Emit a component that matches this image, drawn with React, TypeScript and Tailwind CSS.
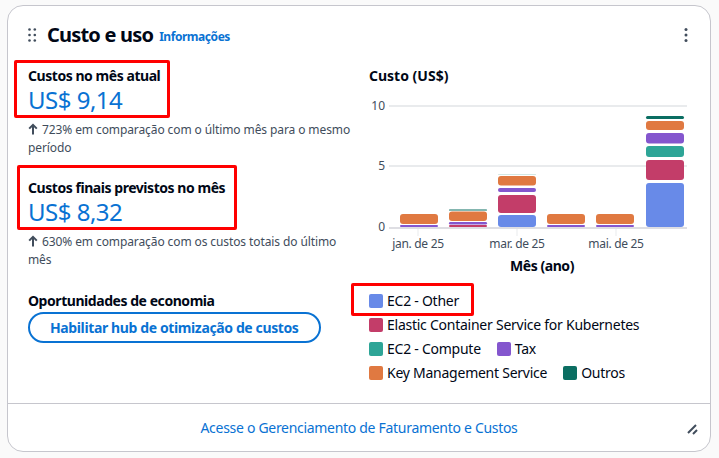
interface Segment {
  color: string;
  top: number;
  bottom: number;
}

interface Bar {
  x: number;
  segments: Segment[];
}

const BLUE = "#688ae8";
const RED = "#c33d69";
const TEAL = "#2ea597";
const PURPLE = "#8456ce";
const ORANGE = "#e07941";
const GREEN = "#0b6e62";

const FONT = "Noto Sans, sans-serif";

// chart coordinates: svg origin sits at page (370, 95)
const smallBar = (x: number): Bar => ({
  x,
  segments: [
    { color: PURPLE, top: 130, bottom: 132 },
    { color: ORANGE, top: 119, bottom: 129 },
  ],
});

const bars: Bar[] = [
  smallBar(31),
  {
    x: 80,
    segments: [
      { color: RED, top: 130, bottom: 132 },
      { color: PURPLE, top: 127, bottom: 129.5 },
      { color: ORANGE, top: 116.5, bottom: 126 },
      { color: GREEN, top: 114.5, bottom: 115.5 },
    ],
  },
  {
    x: 129,
    segments: [
      { color: BLUE, top: 120, bottom: 132 },
      { color: RED, top: 100, bottom: 118 },
      { color: PURPLE, top: 93, bottom: 97 },
      { color: ORANGE, top: 81, bottom: 90.5 },
      { color: "#d3e8e4", top: 79, bottom: 80 },
    ],
  },
  smallBar(178),
  smallBar(227),
  {
    x: 277,
    segments: [
      { color: BLUE, top: 88, bottom: 132 },
      { color: RED, top: 65, bottom: 85 },
      { color: TEAL, top: 51, bottom: 62 },
      { color: PURPLE, top: 38, bottom: 48.5 },
      { color: ORANGE, top: 26, bottom: 35 },
      { color: GREEN, top: 21, bottom: 24 },
    ],
  },
];

const legend = [
  { label: "EC2 - Other", color: BLUE },
  { label: "Elastic Container Service for Kubernetes", color: RED },
  { label: "EC2 - Compute", color: TEAL },
  { label: "Tax", color: PURPLE },
  { label: "Key Management Service", color: ORANGE },
  { label: "Outros", color: GREEN },
];

function ArrowUp() {
  return (
    <svg width="10" height="12" viewBox="0 0 10 12" className="mr-1 inline-block align-[-1px]">
      <path d="M5 11.5V2M1.2 5.6L5 1.8l3.8 3.8" fill="none" stroke="#414d5c" strokeWidth="2" />
    </svg>
  );
}

function Chart() {
  return (
    <svg width="320" height="182" viewBox="0 0 320 182" className="block">
      <line x1="20" y1="11" x2="318" y2="11" stroke="#e9ebed" strokeWidth="2" />
      <line x1="20" y1="71" x2="318" y2="71" stroke="#e9ebed" strokeWidth="2" />
      {[
        { y: 11, t: "10" },
        { y: 71, t: "5" },
        { y: 132, t: "0" },
      ].map((l) => (
        <text key={l.t} x="16" y={l.y + 4} textAnchor="end" fontSize="12" fill="#414d5c" fontFamily={FONT}>
          {l.t}
        </text>
      ))}
      {bars.map((bar, i) => (
        <g key={i}>
          {bar.segments.map((s, j) => {
            const h = s.bottom - s.top;
            return (
              <rect
                key={j}
                x={bar.x}
                y={s.top}
                width="38"
                height={h}
                rx={Math.min(3, h / 2)}
                fill={s.color}
              />
            );
          })}
        </g>
      ))}
      <line x1="20" y1="133" x2="318" y2="133" stroke="#dedee3" strokeWidth="2" />
      {[
        { x: 49, t: "jan. de 25" },
        { x: 148, t: "mar. de 25" },
        { x: 247, t: "mai. de 25" },
      ].map((l) => (
        <g key={l.t}>
          <line x1={l.x} y1="134" x2={l.x} y2="141" stroke="#e9ebed" strokeWidth="1" />
          <text x={l.x} y="153" textAnchor="middle" fontSize="12" letterSpacing="-0.3" fill="#414d5c" fontFamily={FONT}>
            {l.t}
          </text>
        </g>
      ))}
      <text x="173" y="176" textAnchor="middle" fontSize="14" letterSpacing="-0.45" fontWeight="700" fill="#000716" fontFamily={FONT}>
        Mês (ano)
      </text>
    </svg>
  );
}

export default function App() {
  return (
    <div className="h-[458px] w-[719px] bg-[#fafafa] pl-[7px] pt-[5px] font-['Noto_Sans',sans-serif] text-[#000716]">
      <div className="flex h-[447px] w-[704px] flex-col rounded-2xl border border-[#c6c6cd] bg-white">
        {/* header */}
        <div className="flex items-center pl-5 pr-[22px] pt-[17px]">
          <svg width="9" height="14" viewBox="0 0 9 14" className="mr-[10px]">
            {[1.5, 7, 12.5].map((y) => (
              <g key={y}>
                <circle cx="1.5" cy={y} r="1.3" fill="#414d5c" />
                <circle cx="6.8" cy={y} r="1.3" fill="#414d5c" />
              </g>
            ))}
          </svg>
          <h2 className="text-[20px] font-bold leading-6 tracking-[-0.8px]">Custo e uso</h2>
          <span className="ml-[6px] mt-[3px] text-[12px] font-bold tracking-[-0.45px] text-[#0972d3]">Informações</span>
          <svg width="4" height="14" viewBox="0 0 4 14" className="ml-auto">
            <circle cx="2" cy="1.5" r="1.5" fill="#414d5c" />
            <circle cx="2" cy="7" r="1.5" fill="#414d5c" />
            <circle cx="2" cy="12.5" r="1.5" fill="#414d5c" />
          </svg>
        </div>

        {/* body */}
        <div className="grid flex-1 grid-cols-2 gap-5 px-5 pt-5">
          <div className="flex flex-col">
            <div className="relative">
              <span className="absolute -left-[14px] -top-[7px] h-[58px] w-[156px] rounded-[2px] border-[3px] border-[#ff0000]" />
              <div className="text-sm font-bold leading-[18px] tracking-[-0.45px]">Custos no mês atual</div>
              <div className="text-[24px] leading-[30px] tracking-[-0.5px] text-[#0972d3]">US$ 9,14</div>
            </div>
            <p className="-mr-3 mt-[6px] text-[12px] leading-[18px] tracking-[-0.1px] text-[#414d5c]">
              <ArrowUp />
              723% em comparação com o último mês para o mesmo período
            </p>
            <div className="relative mt-[22px]">
              <span className="absolute -left-[11px] -top-[14px] h-[65px] w-[220px] rounded-[2px] border-[3px] border-[#ff0000]" />
              <div className="text-sm font-bold leading-[18px] tracking-[-0.45px]">Custos finais previstos no mês</div>
              <div className="text-[24px] leading-[30px] tracking-[-0.5px] text-[#0972d3]">US$ 8,32</div>
            </div>
            <p className="mt-[6px] text-[12px] leading-[18px] tracking-[-0.1px] text-[#414d5c]">
              <ArrowUp />
              630% em comparação com os custos totais do último mês
            </p>
            <div className="mt-[23px] text-sm font-bold leading-[18px] tracking-[-0.45px]">Oportunidades de economia</div>
            <div className="mt-[2px]">
              <button className="h-[31px] rounded-full border-2 border-[#0972d3] px-5 text-sm font-bold tracking-[-0.38px] text-[#0972d3]">
                Habilitar hub de otimização de custos
              </button>
            </div>
          </div>

          <div className="flex flex-col">
            <div className="text-sm font-bold leading-[18px]">Custo (US$)</div>
            <div className="mt-[10px]">
              <Chart />
            </div>
            <div className="mt-[15px] flex flex-wrap gap-x-4 gap-y-[6px]">
              {legend.map((item, i) => (
                <div key={item.label} className="relative flex items-center gap-1 text-sm leading-[18px] tracking-[-0.25px]">
                  {i === 0 && (
                    <span className="absolute -left-[18px] -top-[9px] h-[33px] w-[123px] rounded-[2px] border-[3px] border-[#ff0000]" />
                  )}
                  <span className="h-[14px] w-[14px] rounded-[2px]" style={{ backgroundColor: item.color }} />
                  <span>{item.label}</span>
                </div>
              ))}
            </div>
          </div>
        </div>

        {/* footer */}
        <div className="relative flex h-[48px] items-center justify-center border-t border-[#c6c6cd]">
          <span className="text-sm tracking-[-0.3px] text-[#0972d3]">Acesse o Gerenciamento de Faturamento e Custos</span>
          <svg width="12" height="12" viewBox="0 0 12 12" className="absolute right-[11px] top-[19px]">
            <path d="M1 10L9 2M6 11L10 7" stroke="#414d5c" strokeWidth="2" fill="none" />
          </svg>
        </div>
      </div>
    </div>
  );
}
